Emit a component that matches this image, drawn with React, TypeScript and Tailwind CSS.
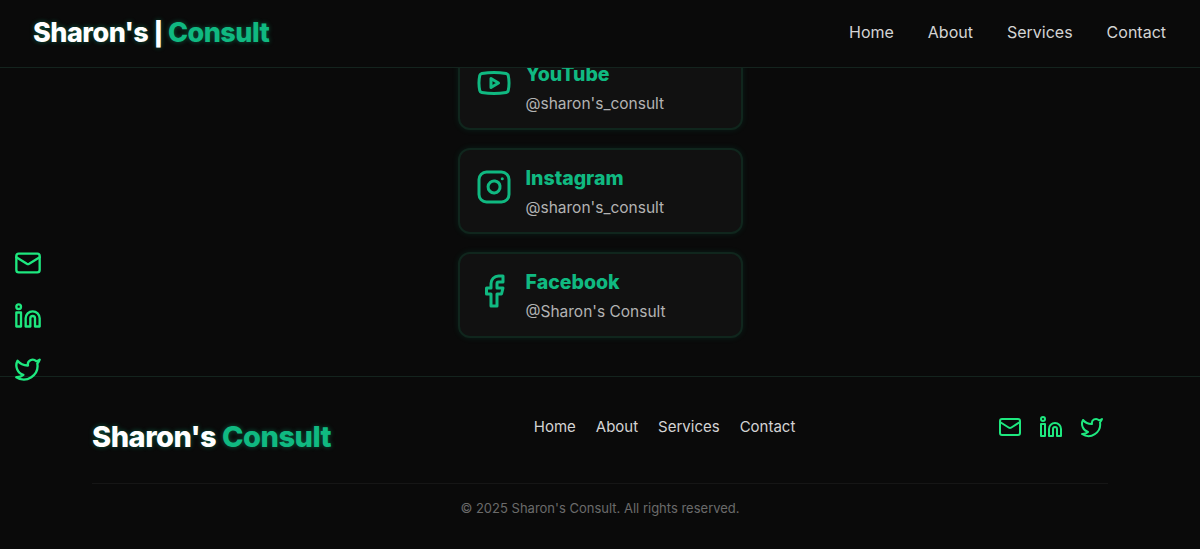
import { Facebook, Instagram, Linkedin, Mail, Twitter, Youtube } from 'lucide-react';

const navLinks = ['Home', 'About', 'Services', 'Contact'];

const socials = [
  { name: 'YouTube', handle: "@sharon's_consult", Icon: Youtube },
  { name: 'Instagram', handle: "@sharon's_consult", Icon: Instagram },
  { name: 'Facebook', handle: "@Sharon's Consult", Icon: Facebook },
];

function SocialCard({ name, handle, Icon }: (typeof socials)[number]) {
  return (
    <div className="flex h-[86px] w-[285px] shrink-0 items-center gap-[14px] rounded-[12px] border-2 border-[#10261d] bg-[#111111] pl-[16px] shadow-[0_0_6px_rgba(16,185,129,0.12)]">
      <Icon className="-mt-[8px] h-[36px] w-[36px] shrink-0 text-[#10b981]" strokeWidth={2} />
      <div>
        <div className="mt-[1px] text-[19.5px] leading-[30px] font-extrabold text-[#10b981]">{name}</div>
        <div className="mt-[3px] text-[15.5px] leading-[24px] text-[#b3b3b3]">{handle}</div>
      </div>
    </div>
  );
}

export default function App() {
  return (
    <div className="relative h-[549px] w-full overflow-hidden bg-[#0a0a0a] font-['Inter',sans-serif] text-white">
      <header className="absolute inset-x-0 top-0 z-10 flex h-[68px] items-center justify-between border-b border-[#14241e] bg-[#0a0a0a] pr-[34px] pl-[33px]">
        <div className="text-[27px] font-extrabold tracking-[-0.5px] [text-shadow:0_0_5px_rgba(16,185,129,0.45)]">
          Sharon's <span className="text-[23px] font-black">|</span> <span className="text-[#10b981]">Consult</span>
        </div>
        <nav className="mb-[4px] flex gap-[34px] text-[16px] text-[#d4d4d4]">
          {navLinks.map((link) => (
            <a key={link}>{link}</a>
          ))}
        </nav>
      </header>

      <div className="absolute top-[249px] left-[14px] z-10 flex flex-col gap-[25px] text-[#1ee87f]">
        <Mail className="h-[28px] w-[28px]" strokeWidth={2} />
        <Linkedin className="h-[28px] w-[28px]" strokeWidth={2} />
        <Twitter className="h-[28px] w-[28px]" strokeWidth={2} />
      </div>

      <main className="flex h-[376px] flex-col items-center gap-[18px] pt-[44px]">
        {socials.map((social) => (
          <SocialCard key={social.name} {...social} />
        ))}
      </main>

      <footer className="border-t border-[#14241e] bg-[#0a0a0a] px-[92px]">
        <div className="flex h-[107px] items-start justify-between border-b border-[#161616] pr-[4px]">
          <div className="mt-[40px] text-[29px] leading-[40px] font-extrabold tracking-[-0.5px] [text-shadow:0_0_5px_rgba(16,185,129,0.45)]">
            Sharon's <span className="text-[#10b981]">Consult</span>
          </div>
          <nav className="mt-[38px] flex gap-[20px] text-[15px] leading-[24px] text-[#d4d4d4]">
            {navLinks.map((link) => (
              <a key={link}>{link}</a>
            ))}
          </nav>
          <div className="mt-[38px] flex gap-[17px] text-[#1ee87f]">
            <Mail className="h-[24px] w-[24px]" strokeWidth={2} />
            <Linkedin className="h-[24px] w-[24px]" strokeWidth={2} />
            <Twitter className="h-[24px] w-[24px]" strokeWidth={2} />
          </div>
        </div>
        <p className="mt-[14px] text-center text-[13px] leading-[20px] text-[#6b6b6b]">
          © 2025 Sharon's Consult. All rights reserved.
        </p>
      </footer>
    </div>
  );
}
